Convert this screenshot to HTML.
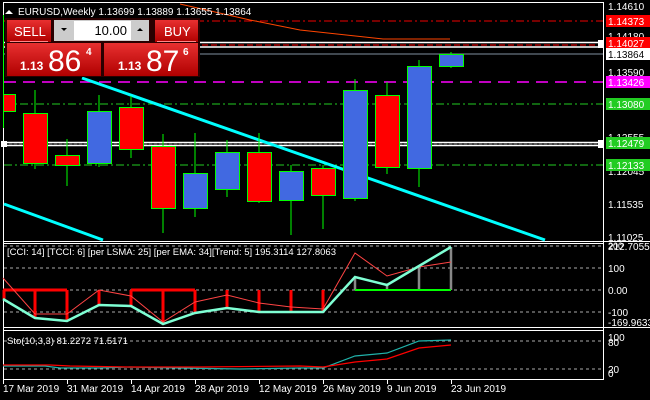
<!DOCTYPE html>
<html><head><meta charset="utf-8"><style>
html,body{margin:0;padding:0;background:#000;width:650px;height:400px;overflow:hidden}
svg{display:block}
text{font-family:"Liberation Sans",sans-serif;font-size:10px;fill:#fff}
</style></head><body>
<svg width="650" height="400" viewBox="0 0 650 400" xmlns="http://www.w3.org/2000/svg">
<rect width="650" height="400" fill="#000"/>
<line x1="3" y1="2.5" x2="604" y2="2.5" stroke="#fff"/>
<line x1="3.5" y1="2" x2="3.5" y2="380" stroke="#fff"/>
<line x1="603.5" y1="2" x2="603.5" y2="380" stroke="#fff"/>
<line x1="3" y1="241.5" x2="650" y2="241.5" stroke="#fff"/>
<line x1="3" y1="243.5" x2="604" y2="243.5" stroke="#fff"/>
<line x1="3" y1="327.5" x2="650" y2="327.5" stroke="#fff"/>
<line x1="3" y1="330.5" x2="604" y2="330.5" stroke="#fff"/>
<line x1="3" y1="379.5" x2="604" y2="379.5" stroke="#fff"/>

<line x1="4" y1="21" x2="603" y2="21" stroke="#e00" stroke-dasharray="8,3,2,3"/>
<polyline points="180,4 250,20 300,30 383,39 450,39" fill="none" stroke="#ff4500" stroke-width="1"/>
<line x1="4" y1="42.5" x2="603" y2="42.5" stroke="#fff" stroke-width="1.5"/>
<line x1="4" y1="45" x2="603" y2="45" stroke="#f00" stroke-dasharray="6,3"/>
<line x1="4" y1="47" x2="603" y2="47" stroke="#fff" stroke-width="1.5"/>
<line x1="4" y1="54" x2="603" y2="54" stroke="#8090a0"/>
<line x1="4" y1="82" x2="603" y2="82" stroke="#f0f" stroke-width="1.5" stroke-dasharray="12,7"/>
<line x1="4" y1="104" x2="603" y2="104" stroke="#2c2" stroke-dasharray="8,3,2,3"/>
<line x1="4" y1="142.5" x2="603" y2="142.5" stroke="#fff" stroke-width="1.5"/>
<line x1="4" y1="144" x2="603" y2="144" stroke="#444" stroke-dasharray="3,2"/>
<line x1="4" y1="145.5" x2="603" y2="145.5" stroke="#fff" stroke-width="1.5"/>
<line x1="4" y1="165" x2="603" y2="165" stroke="#2c2" stroke-dasharray="8,3,2,3"/>
<rect x="1" y="141" width="6" height="6" fill="#fff"/>
<rect x="598" y="40" width="6" height="8" fill="#fff"/>
<rect x="598" y="140" width="6" height="8" fill="#fff"/>

<line x1="82" y1="78" x2="545" y2="240" stroke="#0ff" stroke-width="3"/>
<line x1="4" y1="204" x2="103" y2="240" stroke="#0ff" stroke-width="3"/>

<g stroke="#0f0" stroke-width="1">
<line x1="3.5" y1="15" x2="3.5" y2="128"/>
<rect x="3.5" y="94.5" width="12" height="17" fill="#f00"/>
<line x1="35" y1="90" x2="35" y2="169"/><rect x="23.5" y="113.5" width="24" height="50" fill="#f00"/>
<line x1="67" y1="139" x2="67" y2="186"/><rect x="55.5" y="155.5" width="24" height="10" fill="#f00"/>
<line x1="99" y1="95" x2="99" y2="167"/><rect x="87.5" y="111.5" width="24" height="52" fill="#4169e1"/>
<line x1="131" y1="96" x2="131" y2="158"/><rect x="119.5" y="107.5" width="24" height="42" fill="#f00"/>
<line x1="163" y1="134" x2="163" y2="233"/><rect x="151.5" y="146.5" width="24" height="62" fill="#f00"/>
<line x1="195" y1="133" x2="195" y2="217"/><rect x="183.5" y="173.5" width="24" height="35" fill="#4169e1"/>
<line x1="227" y1="140" x2="227" y2="197"/><rect x="215.5" y="152.5" width="24" height="37" fill="#4169e1"/>
<line x1="259" y1="133" x2="259" y2="203"/><rect x="247.5" y="152.5" width="24" height="49" fill="#f00"/>
<line x1="291" y1="165" x2="291" y2="235"/><rect x="279.5" y="171.5" width="24" height="29" fill="#4169e1"/>
<line x1="323" y1="165" x2="323" y2="229"/><rect x="311.5" y="168.5" width="24" height="27" fill="#f00"/>
<line x1="355" y1="79" x2="355" y2="201"/><rect x="343.5" y="90.5" width="24" height="108" fill="#4169e1"/>
<line x1="387" y1="82" x2="387" y2="174"/><rect x="375.5" y="95.5" width="24" height="72" fill="#f00"/>
<line x1="419" y1="60" x2="419" y2="187"/><rect x="407.5" y="66.5" width="24" height="102" fill="#4169e1"/>
<line x1="451" y1="52" x2="451" y2="68"/><rect x="439.5" y="54.5" width="24" height="12" fill="#4169e1"/>
</g>

<polygon points="5,14 9,10 13,14" fill="#fff"/>
<text x="18" y="15">EURUSD,Weekly  1.13699 1.13889 1.13655 1.13864</text>

<rect x="5" y="18" width="195" height="59" fill="#2a0000"/>
<defs>
<linearGradient id="rg" x1="0" y1="0" x2="0" y2="1"><stop offset="0" stop-color="#e83030"/><stop offset="1" stop-color="#b00000"/></linearGradient>
</defs>
<rect x="7" y="20" width="44" height="22" fill="url(#rg)"/>
<line x1="10" y1="41.5" x2="48" y2="41.5" stroke="#f88"/>
<text x="14" y="36" style="font-size:13px">SELL</text>
<rect x="155" y="20" width="43" height="22" fill="url(#rg)"/>
<line x1="157" y1="41.5" x2="196" y2="41.5" stroke="#f88"/>
<text x="164" y="36" style="font-size:13px">BUY</text>
<rect x="54" y="20" width="95" height="21" fill="#ccc"/>
<rect x="74" y="21" width="57" height="19" fill="#fff"/>
<polygon points="61,28 67,28 64,31" fill="#000"/>
<polygon points="137,31 143,31 140,28" fill="#000"/>
<text x="127" y="35" text-anchor="end" style="font-size:13px;fill:#000">10.00</text>
<rect x="7" y="43" width="94" height="33" fill="url(#rg)"/>
<rect x="104" y="43" width="94" height="33" fill="url(#rg)"/>
<text x="20" y="70" style="font-size:12px;font-weight:bold">1.13</text>
<text x="48" y="71" style="font-size:30px">86</text>
<text x="86" y="55" style="font-size:10px;font-weight:bold">4</text>
<text x="118" y="70" style="font-size:12px;font-weight:bold">1.13</text>
<text x="146" y="71" style="font-size:30px">87</text>
<text x="183" y="55" style="font-size:10px;font-weight:bold">6</text>

<g>
<text x="608" y="10">1.14610</text>
<text x="608" y="40">1.14180</text>
<text x="608" y="76">1.13590</text>
<text x="608" y="141">1.12555</text>
<text x="608" y="175">1.12045</text>
<text x="608" y="208">1.11535</text>
<text x="608" y="241">1.11025</text>
<rect x="606" y="15" width="44" height="12" fill="#f00"/><text x="608" y="25">1.14373</text>
<rect x="606" y="37" width="44" height="12" fill="#f00"/><text x="608" y="47">1.14027</text>
<rect x="606" y="48" width="44" height="12" fill="#fff"/><text x="608" y="58" style="fill:#000">1.13864</text>
<rect x="606" y="76" width="44" height="12" fill="#f0f"/><text x="608" y="86">1.13426</text>
<rect x="606" y="98" width="44" height="12" fill="#2c2"/><text x="608" y="108">1.13080</text>
<rect x="606" y="137" width="44" height="12" fill="#2c2"/><text x="608" y="147">1.12479</text>
<rect x="606" y="159" width="44" height="12" fill="#2c2"/><text x="608" y="169">1.12133</text>
</g>

<g stroke="#aaa" stroke-dasharray="3,3">
<line x1="4" y1="246" x2="603" y2="246"/>
<line x1="4" y1="268" x2="603" y2="268"/>
<line x1="4" y1="290" x2="603" y2="290"/>
<line x1="4" y1="312" x2="603" y2="312"/>
</g>
<text x="7" y="255" style="font-size:9.5px">[CCI: 14] [TCCI: 6] [per LSMA: 25] [per EMA: 34][Trend: 5]  195.3114 127.8063</text>
<g stroke="#f00" stroke-width="3">
<line x1="3" y1="290" x2="67" y2="290"/><line x1="131" y1="290" x2="195" y2="290"/>
<line x1="4" y1="290" x2="4" y2="299"/><line x1="35" y1="290" x2="35" y2="318"/><line x1="67" y1="290" x2="67" y2="321"/>
<line x1="99" y1="290" x2="99" y2="305"/><line x1="131" y1="290" x2="131" y2="306"/><line x1="163" y1="290" x2="163" y2="324"/>
<line x1="195" y1="290" x2="195" y2="313"/><line x1="227" y1="290" x2="227" y2="308"/><line x1="259" y1="290" x2="259" y2="312"/>
<line x1="291" y1="290" x2="291" y2="312"/><line x1="323" y1="290" x2="323" y2="312"/>
</g>
<g stroke="#888" stroke-width="2.5">
<line x1="355" y1="290" x2="355" y2="277"/><line x1="387" y1="290" x2="387" y2="285"/>
<line x1="419" y1="290" x2="419" y2="266"/><line x1="451" y1="290" x2="451" y2="247"/>
</g>
<line x1="355" y1="290" x2="451" y2="290" stroke="#0f0" stroke-width="2"/>
<polyline points="3,278 35,314 67,314 99,290 131,296 163,322 195,302 227,295 259,303 291,307 323,309 355,253 387,276 419,267 451,262" fill="none" stroke="#f44" stroke-width="1"/>
<polyline points="3,299 35,318 67,321 99,305 131,306 163,324 195,313 227,308 259,312 291,312 323,312 355,277 387,285 419,266 451,247" fill="none" stroke="#7fffd4" stroke-width="2.5"/>
<text x="608" y="250">212.7055</text>
<text x="608" y="249" style="font-size:9px">200</text>
<text x="608" y="272">100</text>
<text x="608" y="294">0.00</text>
<text x="608" y="316">-100</text>
<text x="608" y="326">-169.9633</text>

<g stroke="#aaa" stroke-dasharray="3,3">
<line x1="4" y1="341" x2="603" y2="341"/>
<line x1="4" y1="369" x2="603" y2="369"/>
</g>
<text x="7" y="344" style="font-size:9.5px">Sto(10,3,3) 81.2272 71.5171</text>
<polyline points="3,366 45,366 60,368 100,368 130,367 180,368 240,369 300,368 323,368 355,356 387,353 419,341 451,340" fill="none" stroke="#20b2aa" stroke-width="1.2"/>
<polyline points="3,365 50,365 70,366 130,367 200,367 300,366 323,367 355,362 387,359 419,348 451,345" fill="none" stroke="#f00" stroke-width="1.2"/>
<text x="608" y="341">100</text>
<text x="608" y="346">80</text>
<text x="608" y="373">20</text>
<text x="608" y="377">0</text>

<g stroke="#fff">
<line x1="3.5" y1="380" x2="3.5" y2="384"/><line x1="67.5" y1="380" x2="67.5" y2="384"/>
<line x1="131.5" y1="380" x2="131.5" y2="384"/><line x1="195.5" y1="380" x2="195.5" y2="384"/>
<line x1="259.5" y1="380" x2="259.5" y2="384"/><line x1="323.5" y1="380" x2="323.5" y2="384"/>
<line x1="387.5" y1="380" x2="387.5" y2="384"/><line x1="451.5" y1="380" x2="451.5" y2="384"/>
</g>
<text x="3" y="392">17 Mar 2019</text>
<text x="67" y="392">31 Mar 2019</text>
<text x="131" y="392">14 Apr 2019</text>
<text x="195" y="392">28 Apr 2019</text>
<text x="259" y="392">12 May 2019</text>
<text x="323" y="392">26 May 2019</text>
<text x="387" y="392">9 Jun 2019</text>
<text x="451" y="392">23 Jun 2019</text>
</svg>
</body></html>
